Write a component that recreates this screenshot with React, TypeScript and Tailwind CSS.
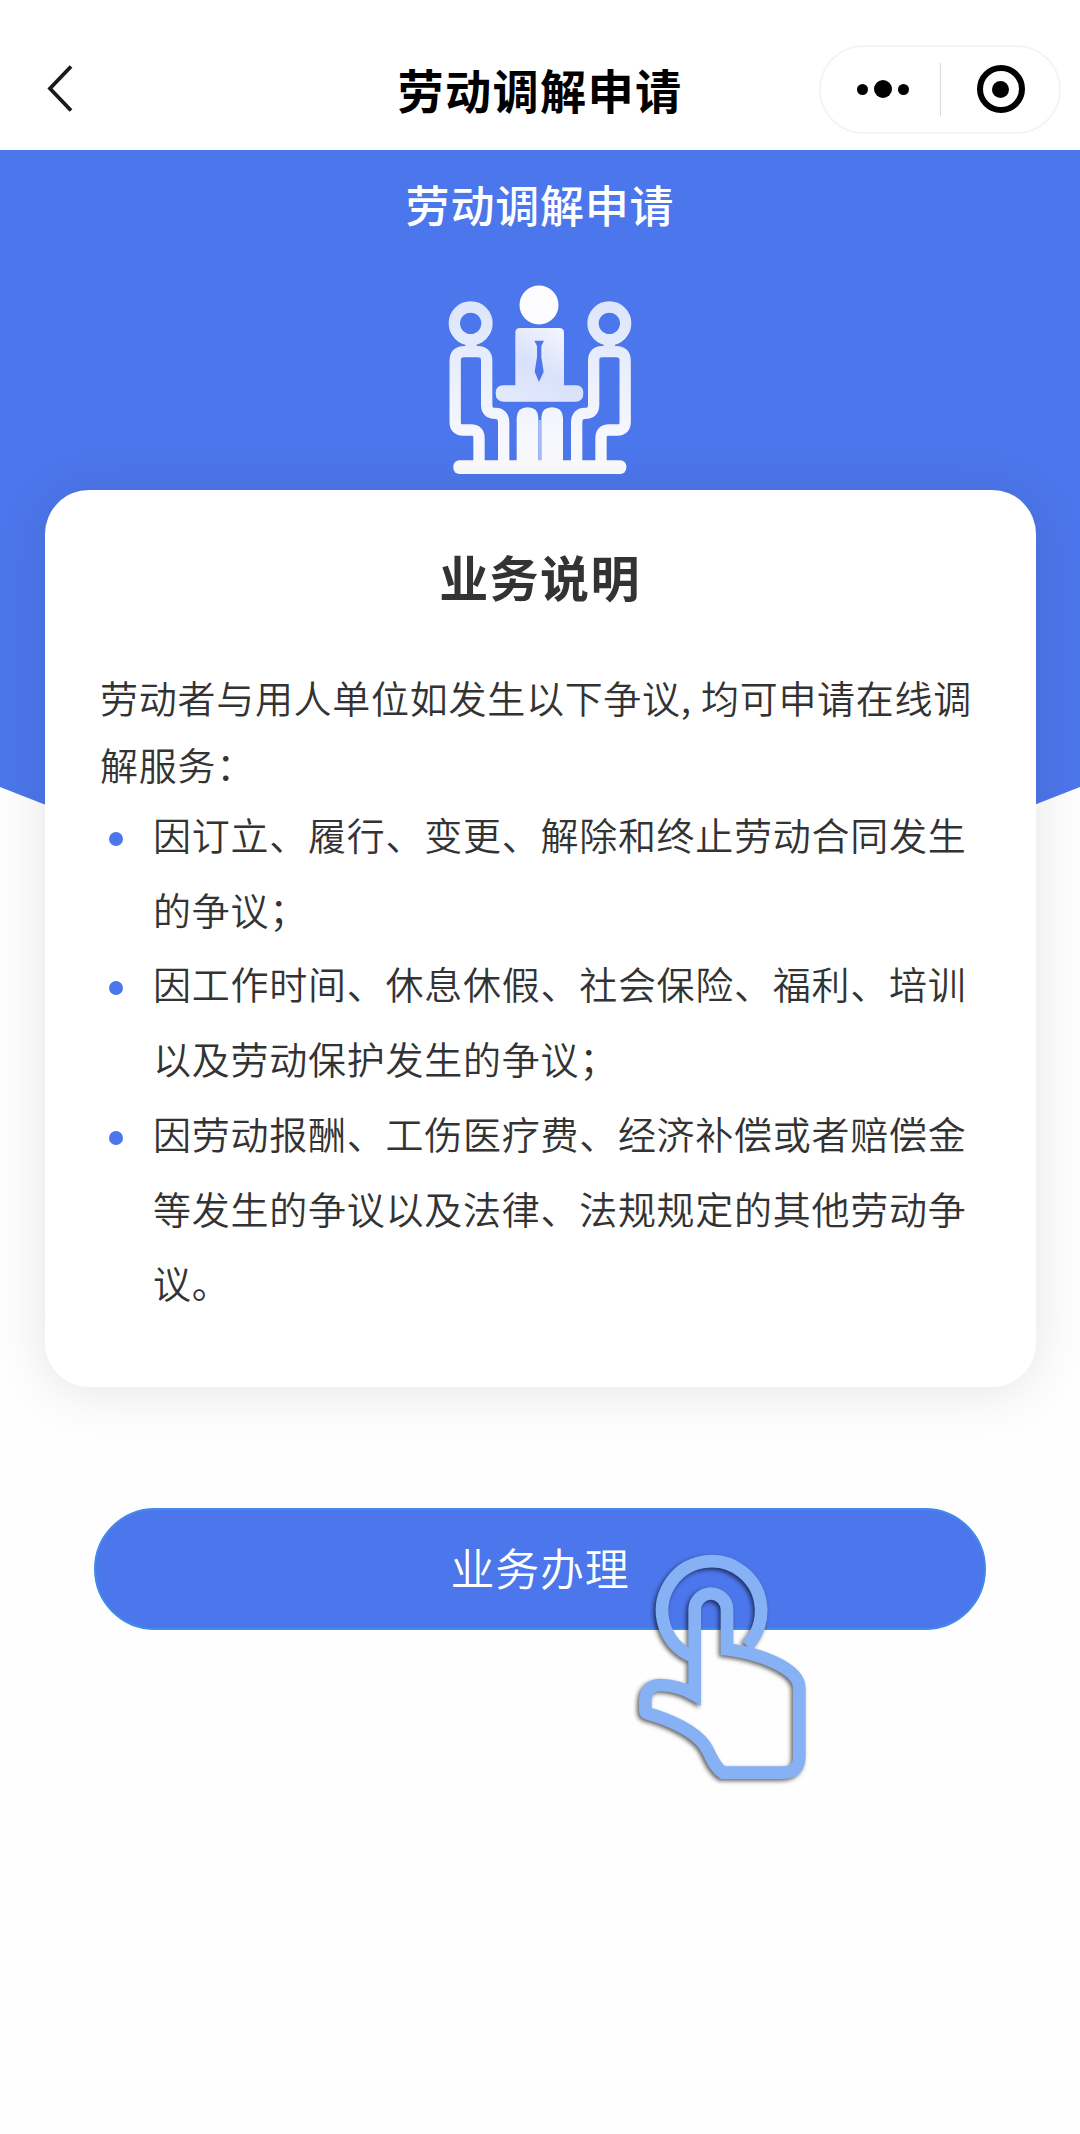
const disputes = [
  "因订立、履行、变更、解除和终止劳动合同发生的争议；",
  "因工作时间、休息休假、社会保险、福利、培训以及劳动保护发生的争议；",
  "因劳动报酬、工伤医疗费、经济补偿或者赔偿金等发生的争议以及法律、法规规定的其他劳动争议。",
];

function NavBar() {
  return (
    <header className="grid h-[150px] grid-cols-[262px_1fr_262px] items-center bg-white pt-[28px]">
      <button type="button" aria-label="返回" className="ml-[46px] justify-self-start text-[#1a1a1a]">
        <svg width="28" height="50" viewBox="0 0 28 50" fill="none">
          <path d="M25 2.5 L4 24.5 L25 46.5" stroke="currentColor" strokeWidth="3.8" />
        </svg>
      </button>
      <h1 className="text-center text-[46.2px] leading-none font-bold tracking-[1.3px] text-black">劳动调解申请</h1>
      <div className="mr-[19px] flex h-[89px] w-[242px] items-center justify-self-end rounded-full border-2 border-[#f4f4f4]">
        <button type="button" aria-label="更多" className="flex w-[119px] items-center justify-center gap-[6px] pl-1">
          <span className="size-[11px] rounded-full bg-black" />
          <span className="size-[18px] rounded-full bg-black" />
          <span className="size-[11px] rounded-full bg-black" />
        </button>
        <span className="h-[53px] w-px bg-[#d9d9d9]" />
        <button type="button" aria-label="关闭" className="flex flex-1 items-center justify-center pl-px">
          <span className="flex size-[48px] items-center justify-center rounded-full border-[6px] border-black">
            <span className="size-[17px] rounded-full bg-black" />
          </span>
        </button>
      </div>
    </header>
  );
}

function MeetingIcon() {
  return (
    <svg className="block" width="220" height="220" viewBox="0 0 660 660" fill="none">
      <defs>
        <linearGradient id="person" gradientUnits="userSpaceOnUse" x1="0" y1="90" x2="0" y2="612">
          <stop offset="0" stopColor="#dce5fc" />
          <stop offset="0.3" stopColor="#e6ecfd" />
          <stop offset="0.75" stopColor="#f5f7fe" />
          <stop offset="1" stopColor="#fbfbfd" />
        </linearGradient>
        <linearGradient id="torso" gradientUnits="userSpaceOnUse" x1="400" y1="175" x2="270" y2="395">
          <stop offset="0" stopColor="#f4f6fe" />
          <stop offset="0.55" stopColor="#d9e1fb" />
          <stop offset="1" stopColor="#e2e9fd" />
        </linearGradient>
      </defs>
      <g stroke="url(#person)" strokeWidth="34">
        <circle cx="122" cy="160" r="49" />
        <circle cx="538" cy="160" r="49" />
        <path d="M147 582 V504 Q147 480 123 480 H99 Q75.500 480 75.500 456 V272 Q75.500 245 103 245 H143 Q170 245 170 272 V404 Q170 430 196 430 Q221 430 221 458 V582" />
        <path d="M513 582 V504 Q513 480 537 480 H562 Q585.500 480 585.500 456 V272 Q585.500 245 558 245 H517 Q491 245 491 272 V404 Q491 430 465 430 Q440 430 440 458 V582" />
      </g>
      <rect x="106" y="216" width="34" height="20" fill="#e3e9fd" />
      <rect x="521" y="216" width="34" height="20" fill="#e3e9fd" />
      <circle cx="327" cy="105" r="58.500" fill="#fdfdff" />
      <path
        d="M270 174 H388 Q402 174 402 188 V346 H438 Q460 346 460 370 Q460 395 438 395 H220 Q197 395 197 370 Q197 346 220 346 H256 V188 Q256 174 270 174 Z"
        fill="url(#torso)"
      />
      <path d="M313 212 H342 L334 228 L334 262 L341 305 L327 336 L314 305 L321 262 L321 228 Z" fill="#4c76ea" />
      <path d="M260 580 V443 Q262 412 293 412 Q324 412 325 443 V580 Z" fill="url(#person)" />
      <path d="M334 580 V443 Q335 412 366 412 Q397 412 399 443 V580 Z" fill="url(#person)" />
      <path d="M325 450 H334 V580 H325 Z" fill="#a9bdf5" />
      <rect x="70" y="571" width="519" height="41" rx="18" fill="#fbfbfd" />
    </svg>
  );
}

function TapHand() {
  return (
    <svg
      className="pointer-events-none absolute top-[35px] left-[536px] drop-shadow-[-2px_2px_2px_rgba(0,0,0,0.6)]"
      width="180"
      height="250"
      viewBox="90 190 540 750"
      fill="none"
      stroke="#86b1f5"
      strokeWidth="38"
    >
      <path d="M275 529 A148.500 148.500 0 1 1 440 498" />
      <path d="M284 645 V390 A48.500 48.500 0 0 1 381 390 V509 C470 520 598 563 598 625 V830 Q598 879 549 879 H369 C340 860 333 826 315 798 C283 752 205 718 142 701 Q136 699 136 691 V668 C136 634 151 616 180 616 C215 616 255 628 284 645 Z" />
    </svg>
  );
}

export default function App() {
  return (
    <div
      lang="zh-CN"
      className="min-h-[2134px] w-[1080px] overflow-hidden bg-[#fefefe] font-['Noto_Sans_CJK_SC',sans-serif] text-[#333333]"
    >
      <NavBar />

      <section className="flex h-[700px] flex-col items-center bg-[#4c76eb] pt-[24px] [clip-path:polygon(0_0,100%_0,100%_637px,919px_700px,161px_700px,0_637px)]">
        <h2 className="text-[44px] leading-[60px] font-medium tracking-[0.8px] text-white">劳动调解申请</h2>
        <div className="mt-[36px]">
          <MeetingIcon />
        </div>
      </section>

      <main className="relative -mt-[360px] px-[44.5px]">
        <div className="h-[897px] rounded-[44px] bg-white px-[55.5px] pt-[52px] shadow-[0_4px_55px_rgba(0,0,0,0.1)]">
          <h3 className="text-center text-[49px] leading-[68px] font-bold tracking-[1.4px]">业务说明</h3>
          <p className="mt-[53px] w-[880px] text-[38px] leading-[67px] font-[350] tracking-[0.72px]">
            劳动者与用人单位如发生以下争议, 均可申请在线调解服务：
          </p>
          <ul className="text-[38px] leading-[74.7px] font-[350] tracking-[0.74px]">
            {disputes.map((text) => (
              <li key={text} className="flex">
                <span className="mt-[35px] mr-[30px] ml-[9px] size-[14px] shrink-0 rounded-full bg-[#4c76eb]" />
                <span className="w-[820px] shrink-0">{text}</span>
              </li>
            ))}
          </ul>
        </div>

        <div className="relative mx-[49.5px] mt-[121px]">
          <button
            type="button"
            className="h-[122px] w-full rounded-full border-2 border-[#438aea] bg-[#4c76eb] pb-1 text-[44px] leading-none font-[350] tracking-[0.8px] text-white"
          >
            业务办理
          </button>
          <TapHand />
        </div>
      </main>
    </div>
  );
}
